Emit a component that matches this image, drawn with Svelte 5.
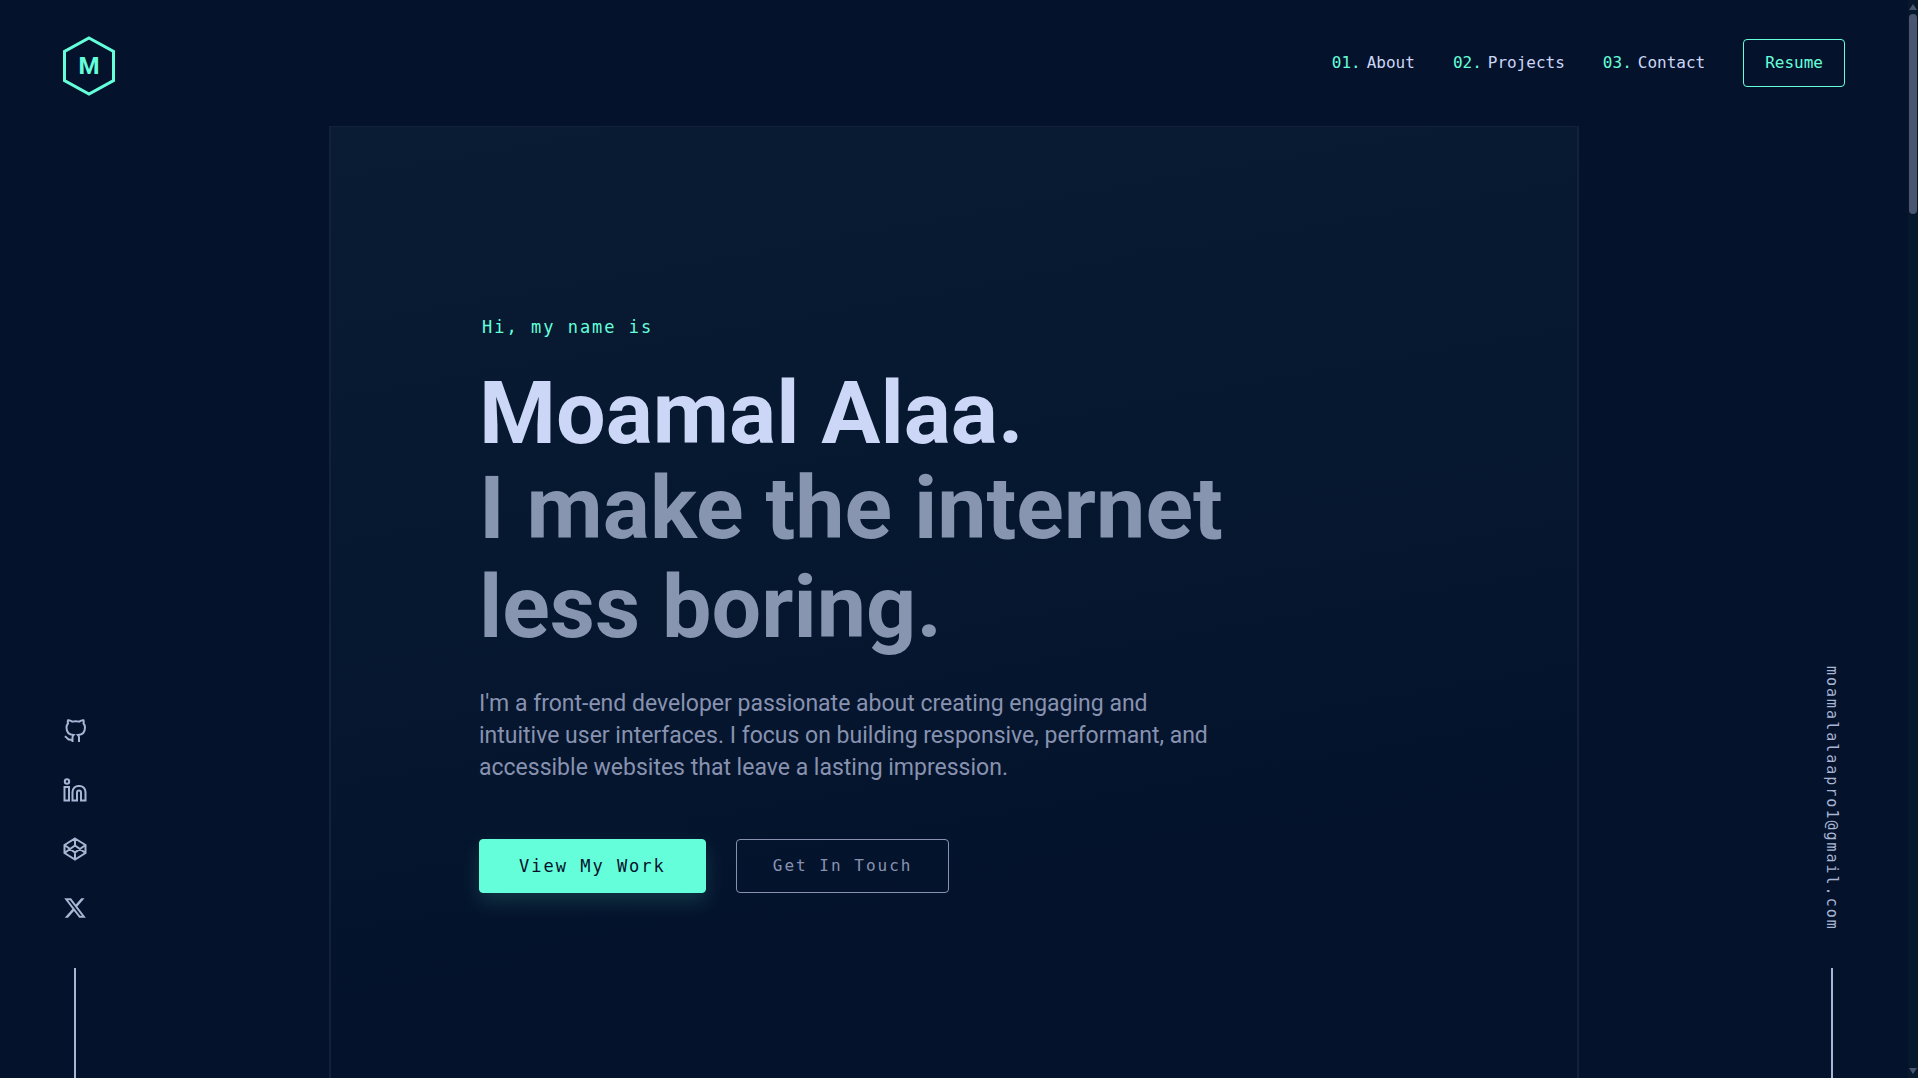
<script>
  const nav = [
    { n: '01.', label: 'About' },
    { n: '02.', label: 'Projects' },
    { n: '03.', label: 'Contact' }
  ];
</script>

<div class="window">
  <div class="page">
    <header>
      <a class="logo" href="#home" aria-label="Home">
        <svg viewBox="0 0 52 60" width="52" height="60" aria-hidden="true">
          <path d="M26 2 L50.5 15.5 V44.5 L26 58 L1.5 44.5 V15.5 Z" />
        </svg>
        <span>M</span>
      </a>
      <nav>
        {#each nav as item}
          <a href="#{item.label.toLowerCase()}"><span class="num">{item.n}</span>{item.label}</a>
        {/each}
        <a class="resume" href="#resume">Resume</a>
      </nav>
    </header>

    <div class="body">
      <aside class="social">
        <a href="#github" aria-label="GitHub">
          <svg viewBox="0 0 24 24"><path d="M16 23v-4.500c0-1-.3-1.800-1-2.500 4-.3 7-2.500 7-7.500 0-1.600-.5-3-1.500-4 .4-1.200.3-2.300-.1-3.300-1.400-.2-2.800.4-4.200 1.400a15 15 0 0 0-6.900 0C7.900 1.600 6.500 1 5.100 1.200c-.4 1-.5 2.100-.1 3.300-1 1-1.500 2.400-1.500 4 0 5 3 7.200 7 7.500-.7.7-1 1.500-1 2.500V23M9.500 20.500c-2.500.6-4.200.1-5.200-1.200-.7-.9-1.300-1.600-2.600-1.900" /></svg>
        </a>
        <a href="#linkedin" aria-label="LinkedIn">
          <svg viewBox="0 0 24 24"><path d="M16 8a6 6 0 0 1 6.500 6v8.500h-4.500v-8a2 2 0 0 0-4 0v8h-4.500v-8.500a6 6 0 0 1 6.500-6z" /><rect x="1.500" y="9" width="4.500" height="13.500" /><circle cx="4" cy="3.500" r="2.200" /></svg>
        </a>
        <a href="#codepen" aria-label="CodePen">
          <svg viewBox="0 0 24 24"><path d="M12 1.500l10.500 6.500v8L12 22.500 1.500 16v-8L12 1.500zM12 22.500v-7M22.500 8l-10.500 7.500L1.500 8M1.500 16l10.500-7.500L22.500 16M12 1.500v7" /></svg>
        </a>
        <a href="#x" aria-label="X">
          <svg viewBox="0 0 24 24"><path class="solid" d="M18.244 2.250h3.308l-7.227 8.260 8.502 11.240H16.170l-5.214-6.817L4.990 21.750H1.680l7.730-8.835L1.254 2.250H8.080l4.713 6.231zm-1.161 17.520h1.833L7.084 4.126H5.117z" /></svg>
        </a>
        <span class="line"></span>
      </aside>

      <main>
        <p class="hello">Hi, my name is</p>
        <h1>Moamal Alaa.</h1>
        <h2>I make the internet less boring.</h2>
        <p class="intro">
          I'm a front-end developer passionate about creating engaging and intuitive user
          interfaces. I focus on building responsive, performant, and accessible websites that
          leave a lasting impression.
        </p>
        <div class="actions">
          <button class="primary">View My Work</button>
          <button class="ghost">Get In Touch</button>
        </div>
      </main>

      <aside class="mail">
        <a href="mailto:moamalalaapro1@gmail.com">moamalalaapro1@gmail.com</a>
        <span class="line"></span>
      </aside>
    </div>
  </div>

  <div class="scrollbar" aria-hidden="true">
    <svg viewBox="0 0 10 12" width="10" height="12"><path d="M5 4 L9 10 H1 Z" /></svg>
    <div class="track"><div class="thumb"></div></div>
    <svg viewBox="0 0 10 12" width="10" height="12"><path d="M5 8 L9 2 H1 Z" /></svg>
  </div>
</div>

<style>
  :global(body) {
    margin: 0;
    background: #04122c;
  }

  .window {
    --mono: 'DejaVu Sans Mono', monospace;
    --sans: Roboto, sans-serif;
    --mint: #64ffda;
    --slate: #8892b0;
    --light: #a8b5d4;
    display: flex;
    height: 100vh;
    overflow: hidden;
    background: #04122c;
    font-family: var(--mono);
  }

  .page {
    flex: 1;
    display: flex;
    flex-direction: column;
  }

  a {
    color: inherit;
    text-decoration: none;
  }

  header {
    display: flex;
    justify-content: space-between;
    align-items: center;
    height: 126px;
    padding: 0 63px;
  }

  .logo {
    display: grid;
    place-items: center;
    padding-top: 6px;
    color: var(--mint);
    font: 700 24px/28px var(--sans);
  }

  .logo > * {
    grid-area: 1 / 1;
  }

  .logo path {
    fill: none;
    stroke: currentColor;
    stroke-width: 3;
  }

  nav {
    display: flex;
    align-items: center;
    gap: 38px;
    color: #ccd6f6;
    font-size: 16px;
    line-height: 24px;
  }

  .num {
    margin-right: 6px;
    color: var(--mint);
  }

  .resume {
    padding: 11px 21px;
    border: 1px solid var(--mint);
    border-radius: 4px;
    color: var(--mint);
  }

  .body {
    flex: 1;
    display: grid;
    grid-template-columns: 1fr minmax(0, 1250px) 1fr;
  }

  aside {
    display: flex;
    flex-direction: column;
    justify-content: flex-end;
    align-items: center;
    color: var(--light);
  }

  .social {
    justify-self: start;
    padding-left: 63px;
    gap: 35px;
  }

  .social a {
    display: flex;
  }

  .social svg {
    width: 24px;
    height: 24px;
    fill: none;
    stroke: currentColor;
    stroke-width: 2;
  }

  .social .solid {
    fill: currentColor;
    stroke: none;
  }

  .line {
    width: 2px;
    height: 110px;
    background: var(--light);
  }

  .social .line {
    margin-top: 13px;
  }

  .mail {
    justify-self: end;
    padding-right: 64px;
    gap: 37px;
  }

  .mail a {
    writing-mode: vertical-rl;
    font-size: 15px;
    line-height: 24px;
    letter-spacing: 2px;
  }

  main {
    box-sizing: border-box;
    padding: 184px 148px 0;
    border: 2px solid #14213b;
    border-top-width: 1px;
    border-bottom: 0;
    background: linear-gradient(170deg, #0a1b34 0%, #06182f 40%, #04122c 80%);
  }

  p,
  h1,
  h2 {
    margin: 0;
  }

  .hello {
    padding-left: 3px;
    color: var(--mint);
    font-size: 17px;
    line-height: 32px;
    letter-spacing: 2px;
  }

  h1,
  h2 {
    max-width: 800px;
    font: 700 88px/99px var(--sans);
  }

  h1 {
    margin-top: 24px;
    color: #ccd6f6;
    line-height: 91px;
  }

  h2 {
    color: #8795b1;
  }

  .intro {
    max-width: 745px;
    margin-top: 32px;
    color: var(--slate);
    font: 400 23px/32px var(--sans);
  }

  .actions {
    display: flex;
    gap: 30px;
    margin-top: 55px;
  }

  button {
    height: 54px;
    border: 1px solid var(--slate);
    border-radius: 4px;
    font: 400 17px/24px var(--mono);
    letter-spacing: 2px;
  }

  .primary {
    padding: 0 39px;
    border-color: var(--mint);
    background: var(--mint);
    color: #02102a;
    box-shadow: 0 8px 20px rgba(100, 255, 218, 0.15);
  }

  .ghost {
    padding: 0 36px;
    background: transparent;
    color: var(--slate);
    font-size: 16px;
  }

  .scrollbar {
    display: flex;
    flex-direction: column;
    width: 10px;
    background: #06182c;
  }

  .scrollbar path {
    fill: #4a5670;
  }

  .track {
    flex: 1;
    padding: 2px 1px;
  }

  .thumb {
    height: 19%;
    border-radius: 4px;
    background: #4a5670;
  }
</style>
